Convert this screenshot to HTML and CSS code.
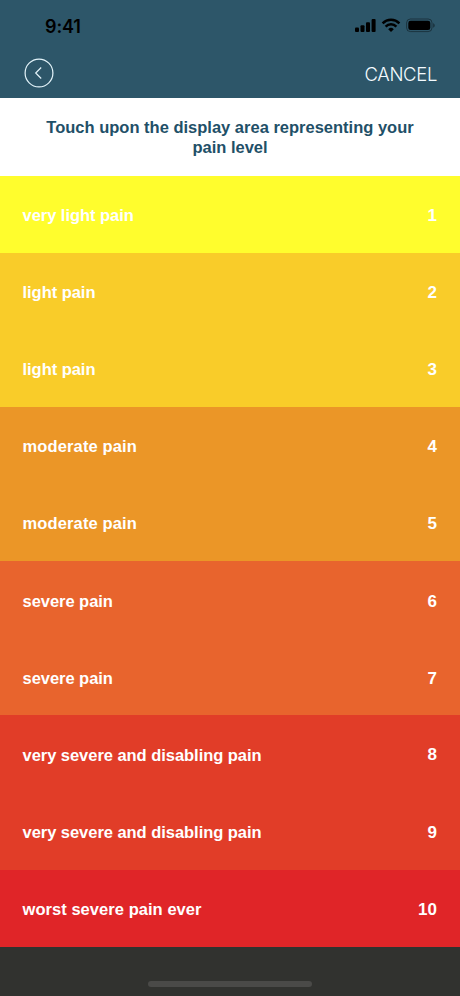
FILE: index.html
```html
<!DOCTYPE html>
<html lang="en">
<head>
<meta charset="utf-8">
<title>Pain level</title>
<link rel="stylesheet" href="styles.css">
</head>
<body>
<header class="top">
  <div class="status">
    <span class="time">9:41</span>
    <svg class="indicators" width="82" height="16" viewBox="0 0 82 16">
      <rect x="1" y="9.500" width="4" height="4.500" rx="1"/>
      <rect x="6.500" y="7.200" width="4" height="6.800" rx="1"/>
      <rect x="12" y="4.300" width="4" height="9.700" rx="1"/>
      <rect x="17.600" y="1" width="4" height="13" rx="1"/>
      <g fill="none" stroke="#000" stroke-width="2.500">
        <path d="M28.600 5.300a12 12 0 0 1 16.800 0"/>
        <path d="M31.600 8.600a7.600 7.600 0 0 1 10.800 0"/>
      </g>
      <path d="M34.200 11.200a4 4 0 0 1 5.600 0L37 14z"/>
      <rect x="52.600" y="1" width="25.400" height="12.600" rx="3.800" fill="none" stroke="#000" stroke-opacity=".4"/>
      <rect x="54.300" y="2.700" width="22" height="9.300" rx="2.300"/>
      <path d="M79.200 5.300v4.400c1-.4 1.500-1.200 1.500-2.200s-.5-1.800-1.500-2.200z" opacity=".45"/>
    </svg>
  </div>
  <nav class="nav">
    <svg class="back" width="30" height="30" viewBox="0 0 30 30"><circle cx="15" cy="15" r="13.900"/><path d="M17.200 9.500L11.700 15l5.500 5.500"/></svg>
    <span class="cancel">CANCEL</span>
  </nav>
</header>
<h1 class="prompt">Touch upon the display area representing your<br>pain level</h1>
<ul class="levels">
  <li class="level very-light"><span>very light pain</span><span>1</span></li>
  <li class="level light"><span>light pain</span><span>2</span></li>
  <li class="level light"><span>light pain</span><span>3</span></li>
  <li class="level moderate"><span>moderate pain</span><span>4</span></li>
  <li class="level moderate"><span>moderate pain</span><span>5</span></li>
  <li class="level severe"><span>severe pain</span><span>6</span></li>
  <li class="level severe"><span>severe pain</span><span>7</span></li>
  <li class="level disabling"><span>very severe and disabling pain</span><span>8</span></li>
  <li class="level disabling"><span>very severe and disabling pain</span><span>9</span></li>
  <li class="level worst"><span>worst severe pain ever</span><span>10</span></li>
</ul>
<footer class="bottom"><div class="home"></div></footer>
</body>
</html>
```
FILE: styles.css
```css
* { box-sizing: border-box; }
body {
  margin: 0;
  height: 996px;
  display: flex;
  flex-direction: column;
  overflow: hidden;
  background: #fff;
  font-family: "Liberation Sans", Arial, sans-serif;
}
.top { height: 98px; background: #2d5669; }
.status {
  height: 50px;
  display: flex;
  justify-content: space-between;
  align-items: center;
  padding: 2px 24px 0 45px;
}
.time { padding-top: 1px; font: 600 18px/22px Inter, sans-serif; letter-spacing: -.1px; color: #000; }
.nav {
  height: 46px;
  display: flex;
  justify-content: space-between;
  align-items: center;
  padding: 0 23px 0 24px;
}
.back { fill: none; stroke: #e4f4fa; stroke-width: 1.2; }
.cancel { padding-top: 1px; color: #f4fbff; font: 300 18.5px/24px Inter, sans-serif; letter-spacing: -.35px; }
.prompt {
  margin: 0;
  height: 78px;
  padding-top: 20px;
  text-align: center;
  font-size: 16.5px;
  line-height: 19.5px;
  color: #1f5068;
}
.levels { margin: 0; padding: 0; list-style: none; height: 771px; display: grid; grid-template-rows: repeat(8, 77px) 78px 77px; }
.level {
  display: flex;
  justify-content: space-between;
  align-items: center;
  padding: 2px 23px 0 22.5px;
  color: #fff;
  font-size: 16.5px;
  font-weight: 700;
}
.level span:first-child { letter-spacing: -.04px; }
.level span:last-child { font-size: 17px; }
.very-light { background: #fffd2d; }
.light { background: #f9cc29; }
.moderate { background: #eb9627; }
.moderate span:first-child { letter-spacing: .13px; }
.severe { padding-top: 4px; background: #e8642d; }
.disabling { padding-top: 3px; background: #e13d28; }
.worst { background: #e02528; }
.worst span:first-child { letter-spacing: .05px; }
.bottom { flex: 1; display: flex; justify-content: center; align-items: flex-end; padding-bottom: 9px; background: #31322f; }
.home { width: 164px; height: 6px; border-radius: 3px; background: #4a4a48; }
```
